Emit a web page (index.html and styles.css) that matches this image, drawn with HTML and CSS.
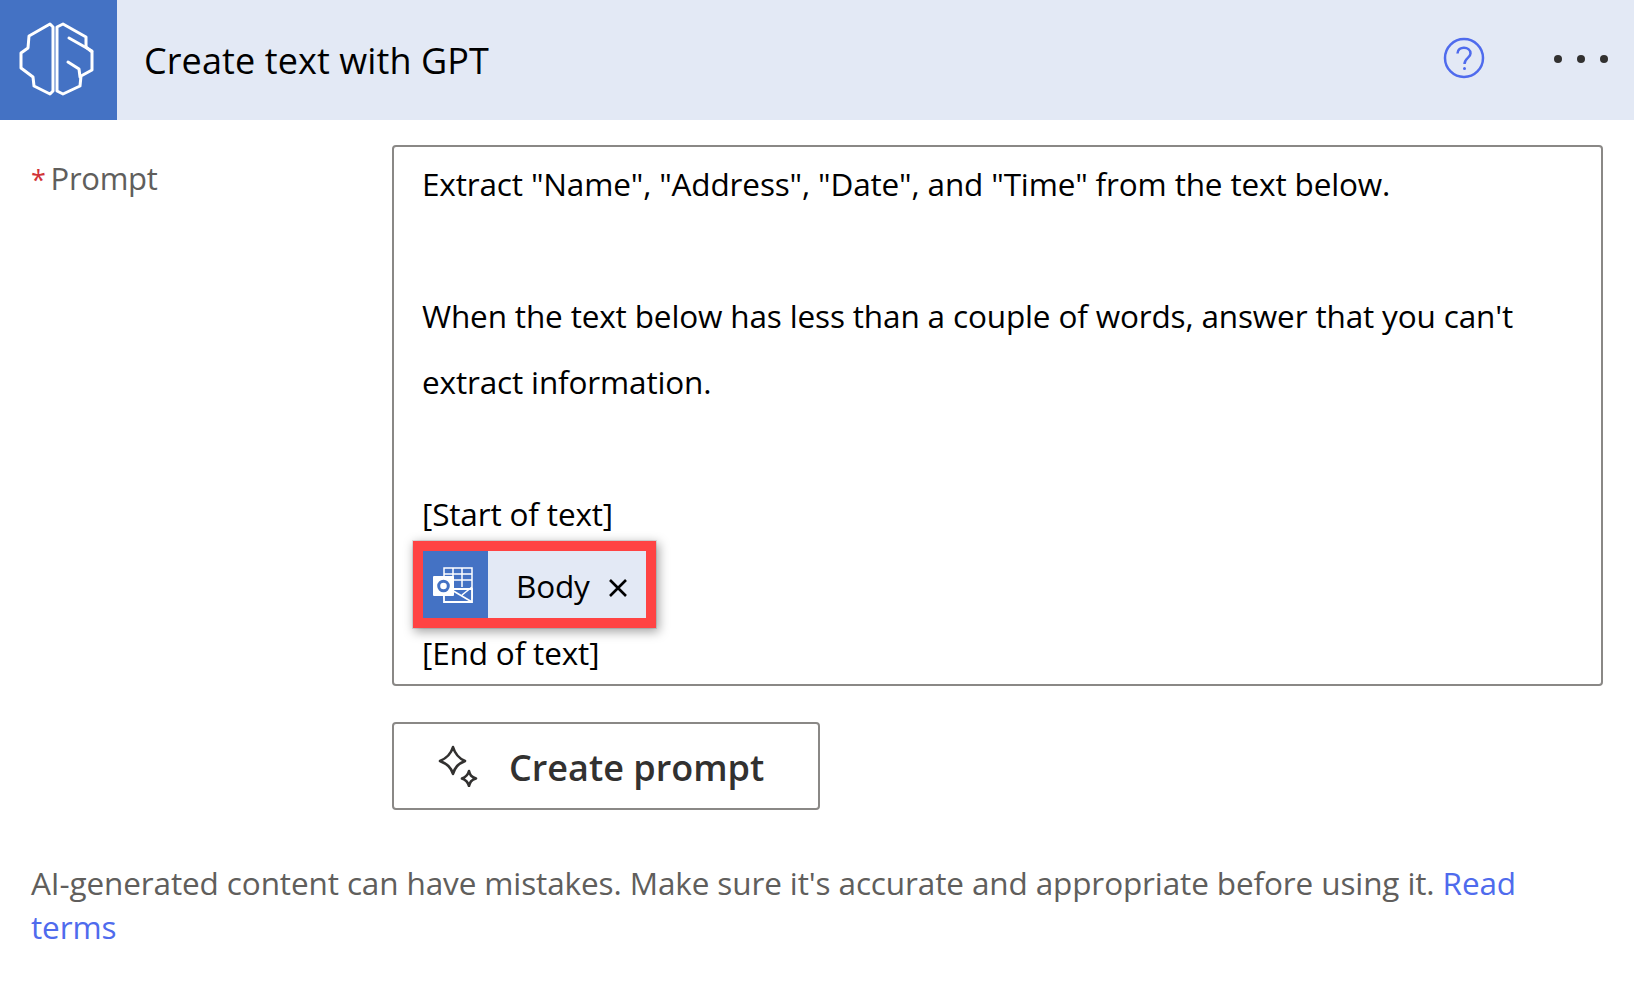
FILE: index.html
```html
<!DOCTYPE html>
<html lang="en">
<head>
    <meta charset="UTF-8">
    <title>Create text with GPT</title>
    <link rel="stylesheet" href="styles.css">
</head>
<body>
    <header class="header">
        <div class="header-logo">
            <svg width="117" height="120" viewBox="0 0 117 120" fill="none" stroke="#ffffff" stroke-width="3" stroke-linejoin="round" stroke-linecap="round">
                <path d="M50 24 L29 36 L28 48 L21 53 L21 68 L33 77 L34 86 L50 94 L53 91 L53 27 Z"/>
                <path d="M63 24 L57 27 L57 91 L63 94 L80 86 L81 76 L92 70 L92 52 L86 47 L86 37 Z"/>
                <path d="M69 38 L92 51"/>
                <path d="M68 62 L79 69 L80 77"/>
            </svg>
        </div>
        <h1 class="header-title">Create text with GPT</h1>
        <div class="header-actions">
            <svg class="help-icon" width="42" height="42" viewBox="0 0 42 42" fill="none" stroke="#4f6bed" stroke-width="2.5">
                <circle cx="21" cy="21" r="19"/>
                <path d="M14.5 16.5 C14.5 8.5 27.5 9 27.5 16.5 C27.5 21 21.5 21 21.5 27"/>
                <circle cx="21.5" cy="31.5" r="1.5" fill="#4f6bed" stroke="none"/>
            </svg>
            <div class="more-dots">
                <span class="dot"></span>
                <span class="dot"></span>
                <span class="dot"></span>
            </div>
        </div>
    </header>

    <main class="form">
        <div class="form-label"><span class="required">*</span>Prompt</div>
        <div class="form-field">
            <div class="prompt-box">
                <p class="line">Extract "Name", "Address", "Date", and "Time" from the text below.</p>
                <p class="line">&nbsp;</p>
                <p class="line">When the text below has less than a couple of words, answer that you can't</p>
                <p class="line">extract information.</p>
                <p class="line">&nbsp;</p>
                <p class="line">[Start of text]</p>
                <div class="token">
                    <span class="token-icon">
                        <svg width="44" height="40" viewBox="0 0 44 40">
                            <path d="M13 3 H41 V33 H13 Z" fill="none" stroke="#ffffff" stroke-width="1.5"/>
                            <path d="M13 9 H41 M22 3 V22 M31 3 V22 M22 15 H41" stroke="#ffffff" stroke-width="1.5"/>
                            <path d="M13 24 H41 V37 H13 Z" fill="#4472c4" stroke="#ffffff" stroke-width="1.8"/>
                            <path d="M19 24 L41 37 M41 22 L31 30" stroke="#ffffff" stroke-width="1.6" fill="none"/>
                            <rect x="2" y="11" width="21" height="20" rx="1" fill="#ffffff"/>
                            <circle cx="12.500" cy="21" r="4.800" fill="none" stroke="#4472c4" stroke-width="3"/>
                        </svg>
                    </span>
                    <span class="token-text">Body</span>
                    <svg class="token-close" width="20" height="20" viewBox="0 0 20 20" stroke="#000000" stroke-width="2.6">
                        <path d="M2 2 L18 18 M18 2 L2 18"/>
                    </svg>
                </div>
                <p class="line line-last">[End of text]</p>
            </div>
            <button class="create-btn" type="button">
                <svg width="40" height="42" viewBox="0 0 40 42" fill="none" stroke="#323130" stroke-width="2.6" stroke-linejoin="round">
                    <path d="M15 2 C17 9 20 13 27 16 C20 19 17 22 15 29 C13 22 9 19 2 16 C9 13 13 9 15 2 Z"/>
                    <path d="M31 26 C32 30 33 32 38 33.500 C33 35 32 37 31 41 C30 37 28 35 24 33.500 C28 32 30 30 31 26 Z"/>
                </svg>
                <span>Create prompt</span>
            </button>
        </div>
    </main>

    <p class="disclaimer">AI-generated content can have mistakes. Make sure it's accurate and appropriate before using it. <a href="#" class="terms">Read</a> <a href="#" class="terms">terms</a></p>
</body>
</html>
```

FILE: styles.css
```css
body {
    font-family: 'Open Sans', 'Noto Sans', sans-serif;
    margin: 0;
    padding: 0;
    background-color: #ffffff;
    color: #000000;
}

.header {
    display: flex;
    align-items: center;
    height: 120px;
    background-color: #e3e9f5;
}

.header-logo {
    width: 117px;
    height: 120px;
    background-color: #4472c4;
}

.header-logo svg {
    display: block;
}

.header-title {
    margin: 1px 0 0 27px;
    font-size: 36px;
    font-weight: 400;
    letter-spacing: 0.1px;
    flex: 1;
}

.header-actions {
    display: flex;
    align-items: center;
    padding-right: 26px;
    gap: 69px;
}

.help-icon {
    display: block;
    margin-top: -5px;
}

.more-dots {
    display: flex;
    gap: 15px;
    margin-top: -2px;
}

.dot {
    width: 8px;
    height: 8px;
    border-radius: 50%;
    background-color: #323130;
}

.form {
    display: flex;
    padding: 25px 31px 0 31px;
}

.form-label {
    width: 361px;
    font-size: 31px;
    color: #605e5c;
    padding-top: 12px;
    letter-spacing: -0.3px;
}

.required {
    margin-right: 5px;
    font-size: 27px;
    color: #d13438;
}

.form-field {
    flex: 1;
}

.prompt-box {
    height: 533px;
    padding: 4px 28px 0;
    border: 2px solid #8a8886;
    border-radius: 4px;
}

.line {
    margin: 0;
    font-size: 31.5px;
    line-height: 66px;
    letter-spacing: -0.15px;
    white-space: nowrap;
}

.line-last {
    line-height: 50px;
}

.token {
    display: flex;
    align-items: center;
    width: 223px;
    height: 67px;
    margin: 4px 0 10px 1px;
    background-color: #e3e9f5;
    outline: 10px solid #ff4343;
    box-shadow: 0 0 0 11px rgba(0, 0, 0, 0.1), 2px 3px 10px 11px rgba(0, 0, 0, 0.35);
    font-size: 31.5px;
    letter-spacing: -0.15px;
}

.token-icon {
    display: flex;
    align-items: center;
    justify-content: center;
    width: 65px;
    height: 67px;
    padding-right: 6px;
    box-sizing: border-box;
    background-color: #4472c4;
}

.token-text {
    margin-left: 28px;
    margin-top: 2px;
}

.token-close {
    margin-left: 18px;
    margin-top: 6px;
}

.create-btn {
    display: flex;
    align-items: center;
    width: 428px;
    height: 88px;
    margin-top: 36px;
    padding: 0 0 0 44px;
    background-color: #ffffff;
    border: 2px solid #8a8886;
    border-radius: 4px;
    font-family: inherit;
    font-size: 36px;
    font-weight: 600;
    color: #323130;
}

.create-btn span {
    margin-left: 31px;
    margin-top: 3px;
}

.disclaimer {
    margin: 51px 31px 0;
    width: 1500px;
    font-size: 31.5px;
    line-height: 44px;
    letter-spacing: -0.12px;
    color: #605e5c;
}

.terms {
    color: #4f6bed;
    text-decoration: none;
}
```
